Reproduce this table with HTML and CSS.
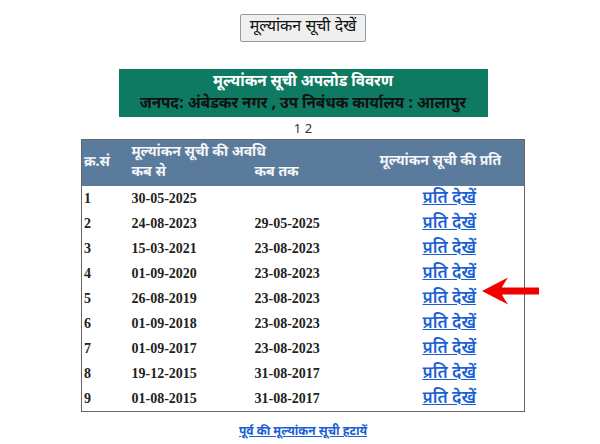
FILE: index.html
```html
<!DOCTYPE html>
<html lang="hi">
<head>
<meta charset="utf-8">
<link rel="stylesheet" href="styles.css">
</head>
<body>
<div class="page">
  <div class="btn-row"><button class="show-btn">मूल्यांकन सूची देखें</button></div>
  <div class="banner">
    <div class="banner-title">मूल्यांकन सूची अपलोड विवरण</div>
    <div class="banner-sub">जनपद: अंबेडकर नगर , उप निबंधक कार्यालय : आलापुर</div>
  </div>
  <div class="pager">1 2</div>
  <div class="table-wrap">
    <table class="list">
      <colgroup>
        <col class="w1"><col class="w2"><col class="w3"><col class="w4">
      </colgroup>
      <thead>
        <tr>
          <th class="c1" rowspan="2">क्र.सं</th>
          <th class="c2 top" colspan="2">मूल्यांकन सूची की अवधि</th>
          <th class="c4" rowspan="2">मूल्यांकन सूची की प्रति</th>
        </tr>
        <tr>
          <th class="c2 bot">कब से</th>
          <th class="c3 bot">कब तक</th>
        </tr>
      </thead>
      <tbody>
        <tr><td class="c1">1</td><td class="c2">30-05-2025</td><td class="c3"></td><td class="c4"><a href="#">प्रति देखें</a></td></tr>
        <tr><td class="c1">2</td><td class="c2">24-08-2023</td><td class="c3">29-05-2025</td><td class="c4"><a href="#">प्रति देखें</a></td></tr>
        <tr><td class="c1">3</td><td class="c2">15-03-2021</td><td class="c3">23-08-2023</td><td class="c4"><a href="#">प्रति देखें</a></td></tr>
        <tr><td class="c1">4</td><td class="c2">01-09-2020</td><td class="c3">23-08-2023</td><td class="c4"><a href="#">प्रति देखें</a></td></tr>
        <tr><td class="c1">5</td><td class="c2">26-08-2019</td><td class="c3">23-08-2023</td><td class="c4"><a href="#">प्रति देखें</a></td></tr>
        <tr><td class="c1">6</td><td class="c2">01-09-2018</td><td class="c3">23-08-2023</td><td class="c4"><a href="#">प्रति देखें</a></td></tr>
        <tr><td class="c1">7</td><td class="c2">01-09-2017</td><td class="c3">23-08-2023</td><td class="c4"><a href="#">प्रति देखें</a></td></tr>
        <tr><td class="c1">8</td><td class="c2">19-12-2015</td><td class="c3">31-08-2017</td><td class="c4"><a href="#">प्रति देखें</a></td></tr>
        <tr><td class="c1">9</td><td class="c2">01-08-2015</td><td class="c3">31-08-2017</td><td class="c4"><a href="#">प्रति देखें</a></td></tr>
      </tbody>
    </table>
    <svg class="arrow" width="58" height="28" viewBox="0 0 58 28">
      <path d="M0 14 L26 0.5 Q21 8 20 10.5 L57 10.5 L57 17.5 L20 17.5 Q21 20 26 27.5 Z" fill="#f00000"/>
    </svg>
  </div>
  <div class="footer"><a href="#">पूर्व की मूल्यांकन सूची हटायें</a></div>
</div>
</body>
</html>
```
FILE: styles.css
```css
html, body {
  margin: 0;
  padding: 0;
  background: #ffffff;
}
body {
  font-family: "Noto Sans Devanagari", "Noto Sans", "Liberation Sans", sans-serif;
  color: #222;
}
.page {
  width: 600px;
  padding-left: 6px;
  box-sizing: border-box;
  display: flex;
  flex-direction: column;
  align-items: center;
}
.btn-row {
  padding-top: 14px;
}
.show-btn {
  font-family: inherit;
  font-size: 16px;
  color: #111;
  height: 28px;
  width: 126px;
  padding: 0;
  background: #efefef;
  border: 1px solid #9a9a9a;
  border-radius: 2px;
  line-height: 24px;
}
.banner {
  margin-top: 27px;
  width: 369px;
  height: 48px;
  box-sizing: border-box;
  background: #0d7a61;
  text-align: center;
  font-weight: bold;
  font-size: 15.2px;
  line-height: 22px;
  padding-top: 2px;
}
.banner-title { color: #ffffff; }
.banner-sub { color: #111; }
.pager {
  font-family: "Noto Sans", "Liberation Sans", sans-serif;
  font-size: 13px;
  color: #333;
  height: 22px;
  line-height: 23px;
}
.table-wrap {
  position: relative;
}
.list {
  width: 443px;
  table-layout: fixed;
  border-collapse: collapse;
  border: 1px solid #666;
}
.w1 { width: 48px; }
.w2 { width: 123px; }
.w3 { width: 123px; }
.w4 { width: 149px; }
.list th {
  background: #5a7b9c;
  color: #f4f6f9;
  font-weight: bold;
  font-size: 14px;
  text-align: left;
  padding: 0 2px;
  line-height: 20px;
  white-space: nowrap;
}
.list th.top { padding-top: 3px; vertical-align: bottom; }
.list th.bot { padding-bottom: 3px; vertical-align: top; }
.list th.c4 { padding-left: 4px; padding-bottom: 2px; }
.list td {
  font-family: "Liberation Serif", serif;
  font-weight: bold;
  font-size: 14px;
  color: #222;
  height: 25px;
  padding: 0 2px;
  vertical-align: middle;
}
.list td.c4 { padding-left: 47px; }
.list a {
  font-family: "Noto Sans Devanagari", "Noto Sans", sans-serif;
  font-weight: 600;
  font-size: 17px;
  color: #1a5fd6;
  text-decoration: underline;
}
.arrow {
  position: absolute;
  left: 401px;
  top: 138px;
}
.footer {
  padding-top: 12px;
  font-size: 12px;
}
.footer a {
  color: #1a5fd6;
  font-weight: bold;
  text-decoration: underline;
}
```
